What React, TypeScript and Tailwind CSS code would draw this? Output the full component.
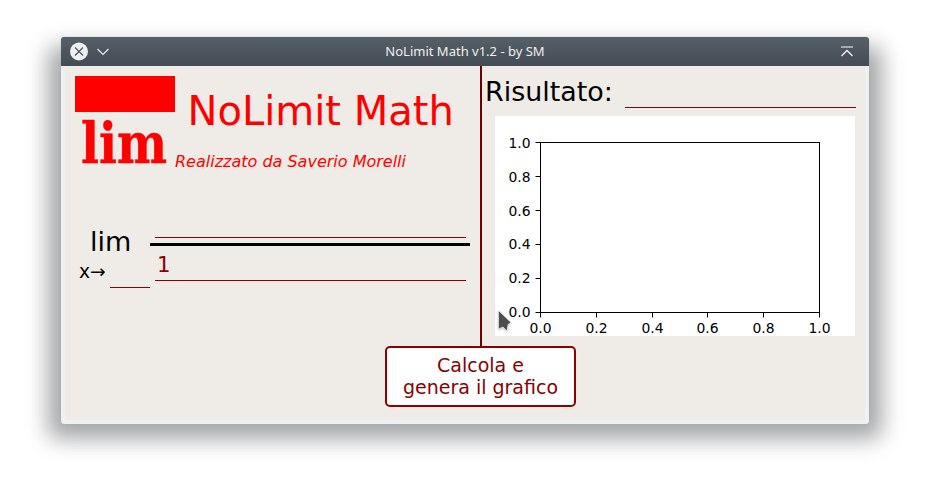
import React from 'react';

const ticks = ['0.0', '0.2', '0.4', '0.6', '0.8', '1.0'];
const xs = [540.5, 596.5, 652.5, 707.5, 763.5, 819.5];
const ys = [312.5, 278.5, 244.5, 210.5, 176.5, 142.5];
const labelYs = [317, 283, 249, 216, 182, 148];

function Plot() {
  return (
    <svg className="ml-[13px] mt-[8px] block h-[220px] w-[360px] bg-white" viewBox="495 116 360 220">
      <rect x="540.5" y="142.5" width="279" height="170" fill="none" stroke="#000" />
      {ticks.map((t, i) => (
        <g key={t} fontSize="13.9" fill="#000">
          <path d={`M${xs[i]} 312V317.5M535.5 ${ys[i]}H540`} stroke="#000" />
          <text x={xs[i]} y="333" textAnchor="middle">{t}</text>
          <text x="530.6" y={labelYs[i]} textAnchor="end">{t}</text>
        </g>
      ))}
      <g className="drop-shadow-[0_1px_1px_rgba(0,0,0,0.25)]">
        <path d="M498.500 310.500V329L503 327L507 331L508 324.500L511 322.500Z" fill="#4d4d4d" stroke="#fff" strokeWidth="0.6" />
      </g>
    </svg>
  );
}

function TitleBar() {
  return (
    <header className="flex h-[29px] items-center rounded-t-[3px] bg-linear-to-b from-[#566068] to-[#434c54] px-2">
      <svg className="h-[20px] w-[42px]" viewBox="0 0 42 20" fill="none">
        <circle cx="10" cy="9.500" r="9" fill="#eff0f1" />
        <path d="M6 5.500L14 13.500M14 5.500L6 13.500" stroke="#475057" strokeWidth="1.100" />
        <path d="M28.500 7L34 12.500L39.500 7" stroke="#eff0f1" strokeWidth="1.100" />
      </svg>
      <h1 className="h-[29px] flex-1 text-center font-['Noto_Sans',sans-serif] text-[13px] leading-[29px] text-[#eff0f1]">NoLimit Math v1.2 - by SM</h1>
      <svg className="h-[20px] w-[42px]" viewBox="0 0 42 20" fill="none" stroke="#eff0f1">
        <path d="M22 5H34" strokeWidth="2" stroke="#a9adb0" />
        <path d="M22.500 14L28 8.500L33.500 14" strokeWidth="1.300" />
      </svg>
    </header>
  );
}

function Logo() {
  return (
    <div className="w-[100px]">
      <div className="h-[36px] bg-[#ff0000]" />
      <svg className="block h-[80px] w-[100px]" viewBox="0 0 100 80">
        <text x="6" y="51" textLength="86" lengthAdjust="spacingAndGlyphs" fontSize="56" fontWeight="700" fill="#f00" stroke="#f00" strokeWidth="0.5" className="font-['DejaVu_Serif',serif]">lim</text>
      </svg>
    </div>
  );
}

export default function App() {
  return (
    <div className="relative isolate h-[485px] w-[930px] overflow-hidden bg-white px-[61px] pt-[37px] font-['DejaVu_Sans',sans-serif]">
      <div className="absolute inset-x-[48px] top-[46px] bottom-[46px] -z-10 rounded-[10px] bg-[#232629]/41 blur-[11px]" />
      <div className="h-[387px] w-[808px] rounded-[3px] bg-[#eff0f1] shadow-[0_0_1px_#9a9ea0]">
        <TitleBar />
        <main className="mx-1 h-[354px] bg-[#efebe7]">
          <div className="flex h-[280px]">
            <section className="w-[415px]">
              <div className="flex h-[160px] pl-[10px] pt-[10px]">
                <Logo />
                <div className="text-[#ff0000]">
                  <h2 className="whitespace-nowrap pl-[12.5px] pt-[11px] text-[40px] leading-[48px]">NoLimit Math</h2>
                  <p className="whitespace-nowrap pt-[17px] text-[16px] leading-[20px] italic">Realizzato da Saverio Morelli</p>
                </div>
              </div>
              <div className="flex">
                <div className="w-[85px]">
                  <div className="pl-[25px] text-[27px] leading-[32px]">lim</div>
                  <div className="flex h-[30px] pl-[14px]">
                    <span className="w-[31px] whitespace-nowrap pt-px text-[18.7px] leading-[26px]">x→</span>
                    <span className="w-[40px] border-b border-[#8b0000]" />
                  </div>
                </div>
                <div className="w-[320px]">
                  <div className="ml-[5px] h-[12px] w-[311px] border-b border-[#8b0000]" />
                  <div className="mt-[5px] h-[3px] bg-black" />
                  <div className="ml-[5px] h-[35px] w-[311px] border-b border-[#8b0000] pl-[2px] pt-[6px] text-[21.3px] leading-[26px] text-[#8b0000]">1</div>
                </div>
              </div>
            </section>
            <div className="h-[281px] w-[2px] bg-[#6d0000]" />
            <section className="flex-1">
              <div className="flex h-[42px] pl-[3px]">
                <h3 className="w-[140px] whitespace-nowrap pt-[10px] text-[26.9px] leading-[32px]">Risultato:</h3>
                <div className="w-[231px] border-b border-[#8b0000]" />
              </div>
              <Plot />
            </section>
          </div>
          <button className="ml-[320px] block h-[61px] w-[191px] rounded-[5px] border-2 border-[#8b0000] bg-white pb-[2px] text-[19px] leading-[22px] text-[#8b0000]">
            Calcola e<br />genera il grafico
          </button>
        </main>
      </div>
    </div>
  );
}
